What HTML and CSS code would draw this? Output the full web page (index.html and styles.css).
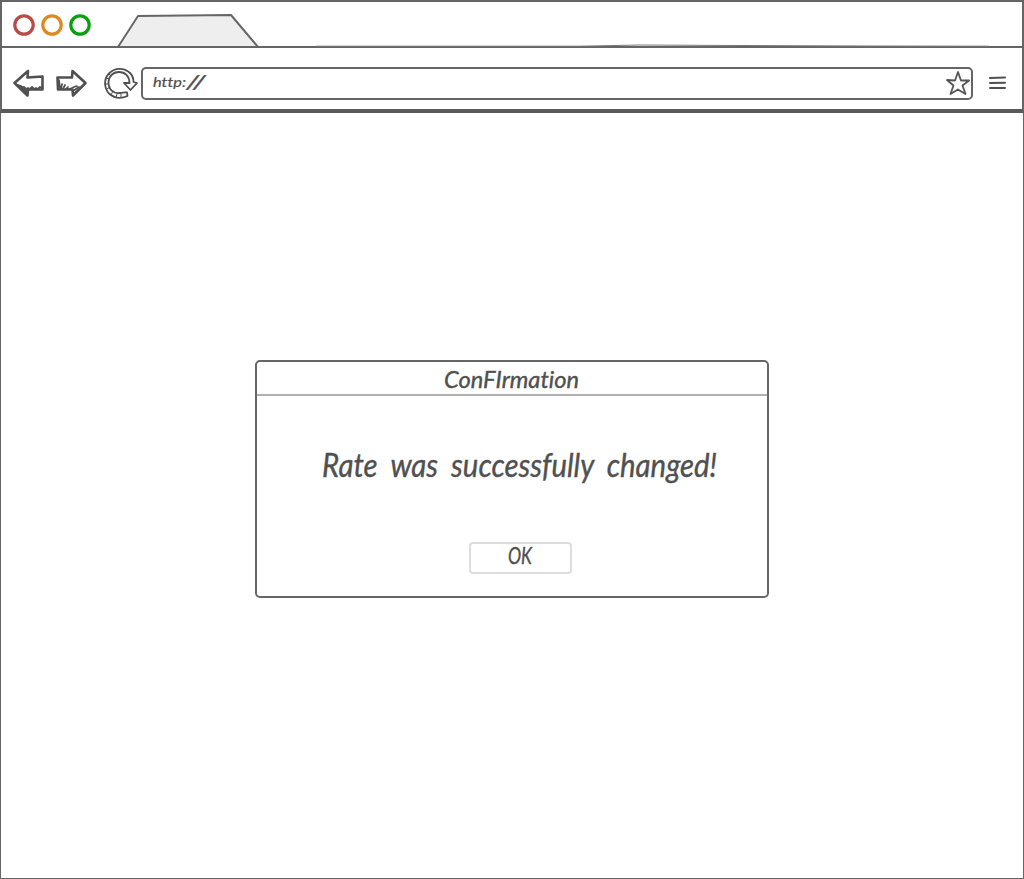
FILE: index.html
```html
<!DOCTYPE html>
<html lang="en">
<head>
<meta charset="utf-8">
<title>Confirmation</title>
<link rel="stylesheet" href="styles.css">
</head>
<body>
<div class="browser">
  <header class="chrome">
    <div class="tabs">
      <svg class="tabs-art" width="1020" height="46" viewBox="2 2 1020 46" fill="none">
        <g stroke-width="3.2">
          <circle cx="24" cy="25" r="9.2" stroke="#b94a48"/>
          <circle cx="52" cy="25" r="9.2" stroke="#dd8a22"/>
          <circle cx="80" cy="25" r="9.2" stroke="#09a00f"/>
        </g>
        <path d="M118 47 138 16 231 15 258 47Z" fill="#eee" stroke="#666" stroke-width="2" stroke-linejoin="round"/>
        <path d="M2 47H1022" stroke="#666" stroke-width="2"/>
        <path d="M316 46.200 580 46.200 640 45 714 45.400 870 46 989 46.200" stroke="#777" stroke-width="1"/>
      </svg>
    </div>
    <div class="toolbar">
      <svg class="nav" width="139" height="50" viewBox="2 58 139 50" fill="none" stroke="#505050" stroke-width="2.6" stroke-linejoin="round" stroke-linecap="round">
        <path d="M14.500 83 28 71 27.500 77.500 42.500 76.500 42.500 89.500 28 89.500 27.500 95.500Z"/>
        <path d="M18 85 21 86 22 88 24 87 26 89 28 88 30 89 32 87 34 89 36 88 38 89 40 87 42 88M20 87 27 93M23 87 28 92" stroke-width="1.8"/>
        <path d="M57.500 77.500 72 77.500 72.500 71 85.500 83 73 95.500 72.500 89.500 58 89.500Z"/>
        <path d="M59 80 60 88M62 84 61 89M65 85 63 89M68 87 66 89 70 89 74 87 77 86M73 91 79 87M74 94 77 91" stroke-width="1.7"/>
        <path d="M127 92.500 127.500 96C121 99 114 98 109 93.500 104 88 103.500 79 109 73.500 115 67.500 124 67.500 130 73 132.500 75.500 133.500 78.500 133.500 82L137 83 130.500 90 124 83 129.500 83C129.500 76 125 72 119 72 112.500 72 108.500 77 108.500 82.500 108.500 90 114 94 120 93 123 93 124 92 127 92.500" stroke-width="1.8"/>
        <path d="M106 78 109 79M105 84 108 84M107 89 110 87M111 95 113 91M116 97 117 94M121 97 121 94M109 74 111 76" stroke-width="1"/>
      </svg>
      <div class="address">
        <svg width="60" height="28" viewBox="143 69 60 28" class="url">
          <text x="153" y="87" font-size="14" textLength="33" lengthAdjust="spacingAndGlyphs">http:</text>
          <text x="186" y="89" font-size="19" textLength="20" lengthAdjust="spacingAndGlyphs">//</text>
        </svg>
        <svg width="26" height="28" viewBox="945 69 26 28" fill="none" stroke="#555" stroke-width="1.8" stroke-linejoin="round">
          <path d="M958 72 961 80.500 969 80.500 962.500 85.500 965.500 94 958 89.500 950.500 94 953.500 85.500 947 80 955 80.500Z"/>
        </svg>
      </div>
      <svg class="menu" width="18" height="14" viewBox="988 76 18 14" stroke="#505050" stroke-width="2" stroke-linecap="round">
        <path d="M990 78 1005 77.500M990 83 1005 82.700M990 88 1005 88"/>
      </svg>
    </div>
  </header>
  <main class="page">
    <section class="dialog">
      <div class="dialog-title">
        <svg width="140" height="32" viewBox="442 362 140 32">
          <text x="444" y="387.500" font-size="24" textLength="135" lengthAdjust="spacingAndGlyphs">ConFIrmation</text>
        </svg>
      </div>
      <div class="dialog-body">
        <svg class="message" width="400" height="50" viewBox="320 440 400 50">
          <text x="322" y="476.500" font-size="33" textLength="395" lengthAdjust="spacingAndGlyphs">Rate was successfully changed!</text>
        </svg>
        <button class="ok" type="button">
          <svg width="28" height="28" viewBox="507 544 28 28">
            <text x="508" y="564" font-size="24" textLength="24" lengthAdjust="spacingAndGlyphs">OK</text>
          </svg>
        </button>
      </div>
    </section>
  </main>
</div>
</body>
</html>
```
FILE: styles.css
```css
* { box-sizing: border-box; }
body { margin: 0; background: #fff; }
svg { display: block; flex: none; overflow: visible; }
text { font-family: Lato, "Noto Sans", sans-serif; font-style: italic; font-weight: 400; font-variant-ligatures: none; fill: #505050; stroke: #505050; stroke-width: .4px; }
.browser { width: 1024px; height: 879px; display: flex; flex-direction: column; }
.chrome { height: 113px; flex: none; border: 2px solid #666; border-bottom: 4px solid #5a5a5a; }
.tabs { height: 46px; }
.toolbar { height: 61px; display: flex; align-items: center; padding: 10px 15px 0 0; }
.nav { margin-top: -1px; }
.address { width: 832px; height: 33px; margin-top: -1px; border: 2px solid #666; border-radius: 5px; display: flex; align-items: center; justify-content: space-between; }
.url text { stroke-width: .2px; }
.menu { margin: -2px 0 0 15px; }
.message text { word-spacing: 7px; }
.page { flex: 1; border: 1px solid #666; border-top: 0; display: flex; justify-content: center; align-items: flex-start; padding-top: 247px; }
.dialog { width: 514px; height: 238px; border: 2px solid #666; border-radius: 5px; }
.dialog-title { height: 34px; border-bottom: 2px solid #b0b0b0; display: flex; justify-content: center; }
.dialog-body { height: 200px; display: flex; flex-direction: column; align-items: flex-start; padding: 44px 0 0 63px; }
.ok { width: 103px; height: 32px; margin: 52px 0 0 149px; padding: 0; background: #fff; border: 2px solid #ddd; border-radius: 4px; display: flex; align-items: center; justify-content: center; }
```
